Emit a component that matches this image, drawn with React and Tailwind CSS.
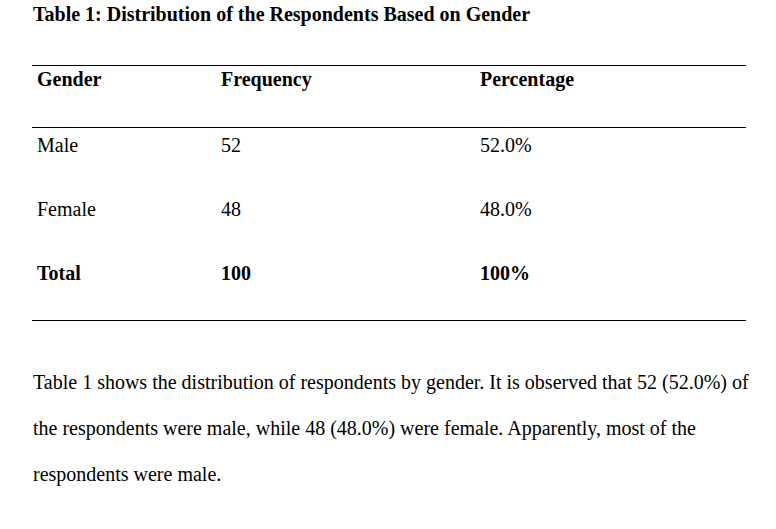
import React from 'react';

const rows = [
  { gender: 'Male', freq: '52', pct: '52.0%' },
  { gender: 'Female', freq: '48', pct: '48.0%' },
  { gender: 'Total', freq: '100', pct: '100%', bold: true },
];

const App = () => {
  return (
    <div className="w-[776px] h-[529px] bg-white text-black font-serif overflow-hidden">
      <div className="pl-[33px] pr-[30px] font-[family-name:Liberation_Serif,serif]">
        <h1 className="pt-[3px] text-[20px] font-bold leading-[22px]">
          Table 1: Distribution of the Respondents Based on Gender
        </h1>

        <div className="mt-[40px] w-[714px] -ml-[1px] text-[20px] leading-[22px]">
          <div className="grid grid-cols-[189px_259px_1fr] border-t border-b border-black h-[63px] pt-[2px] font-bold">
            <div className="pl-[5px]">Gender</div>
            <div>Frequency</div>
            <div>Percentage</div>
          </div>
          <div className="border-b border-black">
            {rows.map((row) => (
              <div
                key={row.gender}
                className={`grid grid-cols-[189px_259px_1fr] h-[64px] pt-[6px] ${row.bold ? 'font-bold' : ''}`}
              >
                <div className="pl-[5px]">{row.gender}</div>
                <div>{row.freq}</div>
                <div>{row.pct}</div>
              </div>
            ))}
          </div>
        </div>

        <p className="mt-[38px] w-[730px] text-[20px] leading-[46px] whitespace-nowrap">
          Table 1 shows the distribution of respondents by gender. It is observed that 52 (52.0%) of
          <br />
          the respondents were male, while 48 (48.0%) were female. Apparently, most of the
          <br />
          respondents were male.
        </p>
      </div>
    </div>
  );
};

export default App;
